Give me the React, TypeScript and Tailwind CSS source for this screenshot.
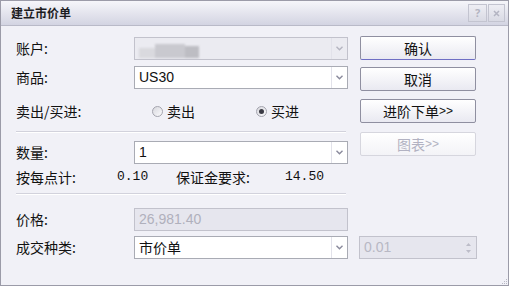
import { ReactNode } from 'react';

const cjk = "font-['Noto_Sans_CJK_SC','Noto_Sans',sans-serif]";
const latin = "font-['Liberation_Sans','Noto_Sans_CJK_SC',sans-serif]";

function Arrow({ dim }: { dim?: boolean }) {
  return (
    <div className="flex h-full w-[16px] items-center justify-center border-l border-[#e2e2ea]">
      <svg width="7" height="5" viewBox="0 0 7 5">
        <path d="M0.5 0.8 L3.5 3.8 L6.5 0.8" fill="none" stroke={dim ? '#b4b4c0' : '#8a8a9c'} strokeWidth="1.4" />
      </svg>
    </div>
  );
}

function Combo({ children, disabled }: { children?: ReactNode; disabled?: boolean }) {
  return (
    <div
      className={`flex h-[23px] w-[214px] items-stretch border ${
        disabled ? 'border-[#c2c2cc] bg-[#ebebf1]' : 'border-[#a9abb4] bg-white'
      }`}
    >
      <div className={`flex flex-1 items-center overflow-hidden pl-[4px] text-[14px] text-[#111] ${latin}`}>{children}</div>
      <Arrow dim={disabled} />
    </div>
  );
}

function Radio({ checked, label }: { checked?: boolean; label: string }) {
  return (
    <div className="flex items-center gap-[4px]">
      <div className="flex h-[11px] w-[11px] items-center justify-center rounded-full border border-[#a4a4ae] bg-gradient-to-br from-[#d8d8de] to-[#fbfbfd]">
        {checked && <div className="h-[5px] w-[5px] rounded-full bg-[#3b3b44]" />}
      </div>
      <span className={`text-[14px] text-[#111] ${cjk}`}>{label}</span>
    </div>
  );
}

function Btn({ children, def, disabled }: { children: ReactNode; def?: boolean; disabled?: boolean }) {
  return (
    <div
      className={`flex h-[24px] w-[116px] items-center justify-center rounded-[2px] border bg-gradient-to-b ${
        disabled
          ? 'border-[#d6d6de] from-white to-[#f3f3f7] text-[#b2b2c2]'
          : def
            ? 'border-[#8f8fa0] border-b-[#6e6ec4] from-white to-[#e9e9f1] text-[#111]'
            : 'border-[#8f8fa0] from-white to-[#e9e9f1] text-[#111]'
      } text-[14px] ${cjk}`}
    >
      {children}
    </div>
  );
}

function Label({ children }: { children: ReactNode }) {
  return <span className={`w-[118px] shrink-0 text-[14px] text-[#111] ${cjk}`}>{children}</span>;
}

function Sep() {
  return <div className="h-[2px] w-[330px] border-t border-b border-t-[#d2d2dc] border-b-white" />;
}

export default function App() {
  return (
    <div className="h-[287px] w-[510px] bg-white">
      <div className="flex h-[286px] w-[509px] flex-col border border-[#9b9ba8] bg-[#f1f1f7]">
        {/* title bar */}
        <div className="flex h-[25px] shrink-0 items-center justify-between border-b border-[#b9bac8] bg-gradient-to-b from-[#f6f6fa] to-[#d3d4e2] pl-[10px] pr-[3px]">
          <span className={`text-[12px] font-bold text-[#1c1c22] ${cjk}`}>建立市价单</span>
          <div className="flex gap-[1px]">
            <div className="flex h-[18px] w-[19px] items-center justify-center border border-[#c3c4d0] bg-gradient-to-b from-[#eeeef4] to-[#d9dae4] text-[11px] font-bold text-[#b3b4c2]">
              ?
            </div>
            <div className="flex h-[18px] w-[17px] items-center justify-center border border-[#c3c4d0] bg-gradient-to-b from-[#eeeef4] to-[#d9dae4]">
              <svg width="7" height="7" viewBox="0 0 7 7">
                <path d="M1 1 L6 6 M6 1 L1 6" stroke="#b3b4c2" strokeWidth="1.5" />
              </svg>
            </div>
          </div>
        </div>

        {/* body */}
        <div className="relative flex flex-1">
          <div className="flex flex-col pl-[15px] pt-[11px]">
            <div className="flex items-center">
              <Label>账户:</Label>
              <Combo disabled>
                <div className="flex h-[18px] items-end blur-[1.2px]">
                  <div className="h-[10px] w-[16px] bg-[#d9d9de]" />
                  <div className="h-[14px] w-[30px] bg-[#c9c9cf]" />
                  <div className="h-[12px] w-[14px] bg-[#bdbdc3]" />
                </div>
              </Combo>
            </div>
            <div className="mt-[6px] flex items-center">
              <Label>商品:</Label>
              <Combo>US30</Combo>
            </div>
            <div className="mt-[12px] flex h-[20px] items-center">
              <Label>卖出/买进:</Label>
              <div className="ml-[18px]">
                <Radio label="卖出" />
              </div>
              <div className="ml-[61px]">
                <Radio checked label="买进" />
              </div>
            </div>
            <div className="mt-[10px]">
              <Sep />
            </div>
            <div className="mt-[8px] flex items-center">
              <Label>数量:</Label>
              <Combo>1</Combo>
            </div>
            <div className="mt-[3px] flex h-[20px] items-center text-[14px] text-[#111]">
              <span className={`w-[101px] shrink-0 ${cjk}`}>按每点计:</span>
              <span className="w-[59px] shrink-0 font-['Liberation_Mono',monospace] text-[13px]">0.10</span>
              <span className={`w-[109px] shrink-0 ${cjk}`}>保证金要求:</span>
              <span className="font-['Liberation_Mono',monospace] text-[13px]">14.50</span>
            </div>
            <div className="mt-[6px]">
              <Sep />
            </div>
            <div className="mt-[13px] flex items-center">
              <Label>价格:</Label>
              <div className={`flex h-[23px] w-[214px] items-center border border-[#c2c2cc] bg-[#e6e6ee] pl-[4px] text-[14px] text-[#b0b0bc] ${latin}`}>
                26,981.40
              </div>
            </div>
            <div className="mt-[5px] flex items-center">
              <Label>成交种类:</Label>
              <Combo>
                <span className={cjk}>市价单</span>
              </Combo>
            </div>
          </div>

          <div className="ml-[12px] flex flex-col pt-[10px]">
            <Btn def>确认</Btn>
            <div className="mt-[7px]">
              <Btn>取消</Btn>
            </div>
            <div className="mt-[8px]">
              <Btn>
                进阶下单<span className={`text-[12px] ${latin}`}>&gt;&gt;</span>
              </Btn>
            </div>
            <div className="mt-[9px]">
              <Btn disabled>
                图表<span className={`text-[12px] ${latin}`}>&gt;&gt;</span>
              </Btn>
            </div>
            <div className="-ml-px mt-[80px] flex h-[23px] w-[118px] items-center border border-[#c2c2cc] bg-[#e6e6ee]">
              <span className={`flex-1 pl-[4px] text-[14px] text-[#b8b8c4] ${latin}`}>0.01</span>
              <div className="flex w-[16px] flex-col items-center gap-[4px]">
                <svg width="5" height="3" viewBox="0 0 5 3">
                  <path d="M0 3 L2.5 0 L5 3 Z" fill="#bcbcc8" />
                </svg>
                <svg width="5" height="3" viewBox="0 0 5 3">
                  <path d="M0 0 L2.5 3 L5 0 Z" fill="#bcbcc8" />
                </svg>
              </div>
            </div>
          </div>

          {/* resize grip */}
          <div className="absolute bottom-[1px] right-[1px] grid grid-cols-3 gap-[1px]">
            {[0, 0, 1, 0, 1, 1, 1, 1, 1].map((v, i) => (
              <div key={i} className={`h-[1px] w-[1px] ${v ? 'bg-[#b8b8c4]' : ''}`} />
            ))}
          </div>
        </div>
      </div>
    </div>
  );
}
